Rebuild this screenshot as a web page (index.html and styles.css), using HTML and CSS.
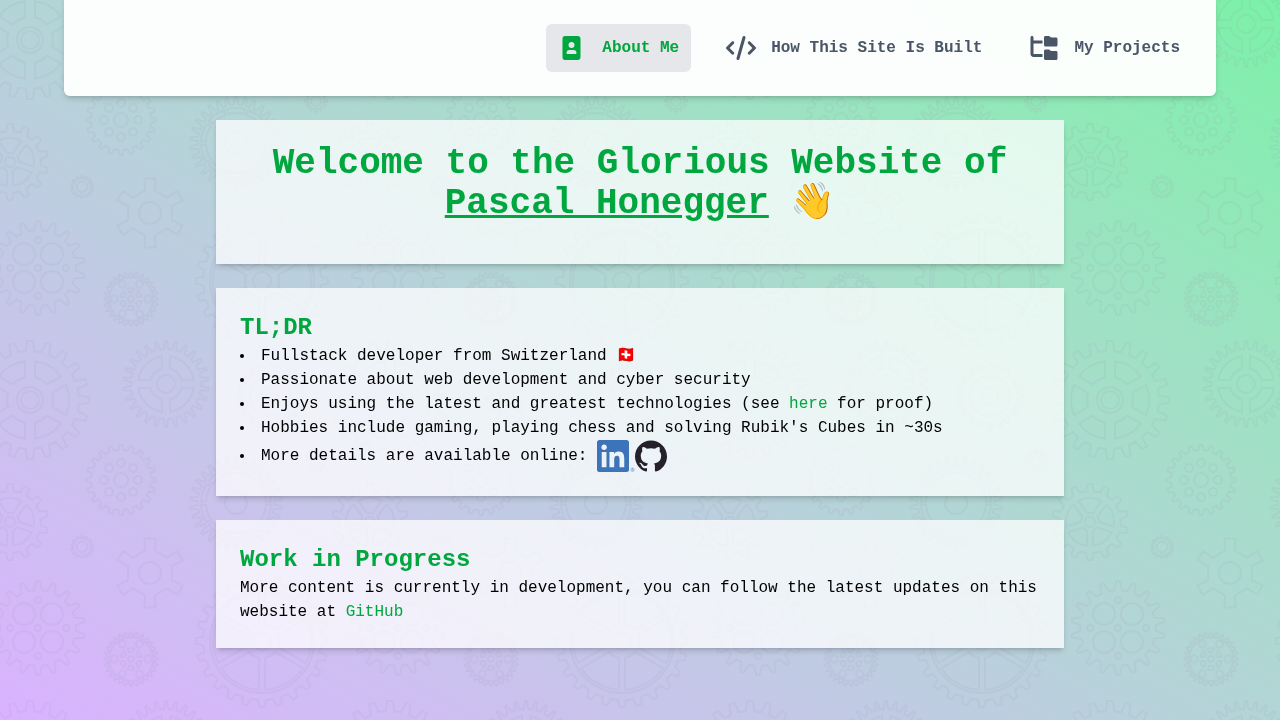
FILE: index.html
```html
<!DOCTYPE html>
<html lang="en">
<head>
<meta charset="utf-8">
<meta name="viewport" content="width=device-width, initial-scale=1">
<title>Pascal Honegger</title>
<link rel="stylesheet" href="styles.css">
</head>
<body>
<svg class="backdrop" aria-hidden="true">
  <defs><pattern id="gears" width="360" height="360" patternUnits="userSpaceOnUse"></pattern></defs>
  <rect width="100%" height="100%" fill="url(#gears)"/>
</svg>
<header class="site-header">
  <nav class="nav">
    <a class="nav-link active" href="#about">
      <svg class="nav-icon" viewBox="0 0 30 24" aria-hidden="true"><path fill-rule="evenodd" d="M8 0h12.500q3 0 3 3v18q0 3-3 3H8q-2.500 0-2.500-3V3q0-3 2.500-3zm6.500 6a3 3 0 1 0 0 6 3 3 0 0 0 0-6zm-2 8q-3 0-3 3.200 0 .8.8.8h8.400q.8 0 .8-.8 0-3.200-3-3.200z"/></svg>
      <span>About Me</span>
    </a>
    <a class="nav-link" href="#built">
      <svg class="nav-icon" viewBox="0 0 640 512" aria-hidden="true"><path d="M392.800 1.200c-17-4.900-34.700 5-39.600 22l-128 448c-4.900 17 5 34.700 22 39.600s34.700-5 39.600-22l128-448c4.900-17-5-34.700-22-39.600zm80.600 120.100c-12.500 12.500-12.500 32.800 0 45.300L562.700 256l-89.400 89.400c-12.500 12.500-12.500 32.800 0 45.300s32.800 12.500 45.300 0l112-112c12.500-12.500 12.500-32.800 0-45.300l-112-112c-12.500-12.500-32.800-12.500-45.300 0zm-306.700 0c-12.500-12.500-32.800-12.500-45.300 0l-112 112c-12.500 12.500-12.500 32.800 0 45.300l112 112c12.500 12.500 32.800 12.500 45.300 0s12.500-32.800 0-45.300L77.300 256l89.400-89.400c12.500-12.500 12.500-32.800 0-45.300z"/></svg>
      <span>How This Site Is Built</span>
    </a>
    <a class="nav-link" href="#projects">
      <svg class="nav-icon" viewBox="-32 0 640 512" aria-hidden="true"><path d="M64 32C64 14.300 49.700 0 32 0S0 14.300 0 32v352c0 35.300 28.700 64 64 64h192v-64H64V160h192V96H64V32zM288 192c0 17.700 14.300 32 32 32h224c17.700 0 32-14.300 32-32V64c0-17.700-14.300-32-32-32h-98.700c-8.500 0-16.600-3.400-22.600-9.400L409.400 9.400c-6-6-14.100-9.400-22.600-9.400H320c-17.700 0-32 14.300-32 32v160zm0 288c0 17.700 14.300 32 32 32h224c17.700 0 32-14.300 32-32V352c0-17.700-14.300-32-32-32h-98.700c-8.500 0-16.600-3.400-22.600-9.400l-13.300-13.300c-6-6-14.100-9.400-22.600-9.400H320c-17.700 0-32 14.300-32 32v160z"/></svg>
      <span>My Projects</span>
    </a>
  </nav>
</header>
<main class="content">
  <section class="card" id="about">
    <h1 class="title">Welcome to the Glorious Website of <span class="name">Pascal Honegger</span> 👋</h1>
  </section>
  <section class="card">
    <h2 class="heading">TL;DR</h2>
    <ul class="facts">
      <li>Fullstack developer from Switzerland 🇨🇭</li>
      <li>Passionate about web development and cyber security</li>
      <li>Enjoys using the latest and greatest technologies (see <a class="link" href="#built">here</a> for proof)</li>
      <li>Hobbies include gaming, playing chess and solving Rubik's Cubes in ~30s</li>
      <li>More details are available online: <a class="social" href="#linkedin" aria-label="LinkedIn"><svg class="linkedin" viewBox="0 0 38 32" aria-hidden="true"><path transform="scale(1.3333)" d="M20.447 20.452h-3.554v-5.569c0-1.328-.027-3.037-1.852-3.037-1.853 0-2.136 1.445-2.136 2.939v5.667H9.351V9h3.414v1.561h.046c.477-.9 1.637-1.850 3.370-1.850 3.601 0 4.267 2.370 4.267 5.455v6.286zM5.337 7.433c-1.144 0-2.063-.926-2.063-2.065 0-1.138.920-2.063 2.063-2.063 1.140 0 2.064.925 2.064 2.063 0 1.139-.925 2.065-2.064 2.065zm1.782 13.019H3.555V9h3.564v11.452zM22.225 0H1.771C.792 0 0 .774 0 1.729v20.542C0 23.227.792 24 1.771 24h20.451C23.200 24 24 23.227 24 22.271V1.729C24 .774 23.200 0 22.222 0h.003z"/><circle class="mark" cx="35.500" cy="29.700" r="1.800"/><path class="mark" d="M35 31v-2.400h.8q.6.6 0 1.200H35m.8 0l.5 1.200"/></svg></a><a class="social" href="#github" aria-label="GitHub"><svg class="github" viewBox="0 0 24 24" aria-hidden="true"><path d="M12 .297c-6.630 0-12 5.373-12 12 0 5.303 3.438 9.800 8.205 11.385.6.113.820-.258.820-.577 0-.285-.010-1.040-.015-2.040-3.338.724-4.042-1.610-4.042-1.610C4.422 18.070 3.633 17.700 3.633 17.700c-1.087-.744.084-.729.084-.729 1.205.084 1.838 1.236 1.838 1.236 1.070 1.835 2.809 1.305 3.495.998.108-.776.417-1.305.760-1.605-2.665-.3-5.466-1.332-5.466-5.930 0-1.310.465-2.380 1.235-3.220-.135-.303-.540-1.523.105-3.176 0 0 1.005-.322 3.300 1.230.960-.267 1.980-.399 3-.405 1.020.006 2.040.138 3 .405 2.280-1.552 3.285-1.230 3.285-1.230.645 1.653.240 2.873.120 3.176.765.840 1.230 1.910 1.230 3.220 0 4.610-2.805 5.625-5.475 5.920.420.360.810 1.096.810 2.220 0 1.606-.015 2.896-.015 3.286 0 .315.210.690.825.570C20.565 22.092 24 17.592 24 12.297c0-6.627-5.373-12-12-12"/></svg></a></li>
    </ul>
  </section>
  <section class="card">
    <h2 class="heading">Work in Progress</h2>
    <p class="text">More content is currently in development, you can follow the latest updates on this website at <a class="link" href="#github">GitHub</a></p>
  </section>
</main>
<script src="gears.js"></script>
</body>
</html>
```
FILE: styles.css
```css
* { box-sizing: border-box; }
body {
  margin: 0;
  min-height: 100vh;
  font: 16px/24px "Liberation Mono", "Noto Color Emoji", monospace;
  color: #000;
  background: linear-gradient(to top right in oklab, #dab2ff, #7bf1a8) fixed;
}
.backdrop {
  position: fixed;
  inset: 0;
  z-index: -1;
  width: 100%;
  height: 100%;
}
.gear {
  fill: none;
  stroke: #9c92ac;
  stroke-opacity: 0.11;
  stroke-width: 2;
  stroke-linejoin: round;
}
.site-header {
  margin: 0 5%;
  padding: 24px;
  border-radius: 0 0 6px 6px;
  background: rgb(255 255 255 / 96%);
  box-shadow: 0 4px 6px -1px rgb(0 0 0 / 15%), 0 2px 4px -2px rgb(0 0 0 / 15%);
}
.nav {
  display: flex;
  flex-wrap: wrap;
  justify-content: flex-end;
  gap: 24px;
}
.nav-link {
  display: flex;
  align-items: center;
  gap: 15px;
  padding: 12px 12px 12px 11px;
  border-radius: 6px;
  color: #4a5565;
  font-weight: 700;
  text-decoration: none;
}
.nav-link.active {
  color: #00a63e;
  background: #e5e7eb;
}
.nav-icon {
  width: 30px;
  height: 24px;
  fill: currentColor;
}
.content {
  display: flex;
  flex-direction: column;
  gap: 24px;
  max-width: 896px;
  margin: 0 auto;
  padding: 24px;
}
.card {
  padding: 24px;
  background: rgb(255 255 255 / 75%);
  box-shadow: 0 4px 6px -1px rgb(0 0 0 / 15%), 0 2px 4px -2px rgb(0 0 0 / 15%);
}
.title {
  margin: 0 0 16px;
  font-size: 36px;
  line-height: 40px;
  text-align: center;
  color: #00a63e;
}
.name { text-decoration: underline; }
.heading {
  margin: 0;
  font-size: 24px;
  line-height: 32px;
  color: #00a63e;
}
.facts {
  margin: 0;
  padding: 0;
  list-style: disc inside;
}
.text { margin: 0; }
.link {
  color: #00a63e;
  text-decoration: none;
}
.social {
  display: inline-block;
  vertical-align: middle;
}
.social svg { display: block; height: 32px; }
.linkedin { width: 38px; fill: #3d74b9; }
.linkedin .mark {
  fill: none;
  stroke: #3d74b9;
  stroke-opacity: 0.7;
  stroke-width: 0.5;
}
.github { width: 32px; fill: #24212a; }
```
FILE: gears.js
```js
const tile = document.getElementById('gears');
const TAU = Math.PI * 2;

const at = (r, a) => `${(r * Math.sin(a)).toFixed(1)} ${(-r * Math.cos(a)).toFixed(1)}`;
const circle = (x, y, r) => `M${x - r} ${y}a${r} ${r} 0 1 0 ${2 * r} 0a${r} ${r} 0 1 0 ${-2 * r} 0z`;

function teeth(n, outer, root, top = 0.15, base = 0.27) {
  const points = [];
  for (let i = 0; i < n; i++) {
    const a = (i * TAU) / n;
    const s = TAU / n;
    points.push(at(root, a - base * s), at(outer, a - top * s), at(outer, a + top * s), at(root, a + base * s));
  }
  return `M${points.join('L')}z`;
}

// Sector windows with a constant spoke width between them.
function windows(n, inner, outer, spoke, turn = 0) {
  let d = '';
  for (let i = 0; i < n; i++) {
    const a = ((i + turn) * TAU) / n;
    const o = Math.PI / n - spoke / outer;
    const k = Math.max(0, Math.PI / n - spoke / inner);
    d += `M${at(inner, a - k)}L${at(outer, a - o)}A${outer} ${outer} 0 0 1 ${at(outer, a + o)}L${at(inner, a + k)}A${inner} ${inner} 0 0 0 ${at(inner, a - k)}z`;
  }
  return d;
}

function holes(n, distance, r) {
  let d = '';
  for (let i = 0; i < n; i++) {
    const a = (i * TAU) / n + Math.PI / 2;
    d += circle(distance * Math.sin(a), -distance * Math.cos(a), r);
  }
  return d;
}

const gears = [
  [30, 40, teeth(20, 59, 49) + windows(6, 23, 39, 5, 0.5) + circle(0, 0, 13) + circle(0, 0, 9)],
  [121, 120, teeth(20, 35, 30) + holes(8, 17, 4) + circle(0, 0, 7)],
  [10, 162, teeth(14, 38, 31) + windows(5, 9, 24, 3) + circle(0, 0, 5)],
  [82, 187, teeth(14, 11, 9) + circle(0, 0, 5.5)],
  [316, 101, teeth(12, 11, 8) + circle(0, 0, 5)],
  [150, 213, teeth(6, 35, 23, 0.15, 0.2) + circle(0, 0, 11)],
  [38, 268, teeth(18, 47, 38, 0.1, 0.29) + holes(4, 28, 3) + circle(0, 0, 3)
    + circle(-14, -14, 11) + circle(14, -14, 11) + circle(-14, 14, 11) + circle(14, 14, 11)],
  [131, 299, teeth(28, 27, 24, 0.06, 0.35) + circle(0, 0, 22) + holes(6, 17, 3.5) + windows(6, 7, 11, 2) + circle(0, 0, 3)],
  [166, 24, teeth(26, 43, 35, 0.1, 0.26) + windows(4, 16, 28, 4, 0.5) + circle(0, 0, 9)],
  [236, 143, teeth(30, 46, 38, 0.1, 0.3) + windows(10, 30, 35, 1.5) + circle(0, 0, 11)],
  [262, 281, teeth(24, 66, 59) + circle(0, 0, 52) + windows(6, 17, 49, 3, 0.5) + circle(0, 0, 9)],
  [270, 36, teeth(20, 33, 28) + circle(0, 0, 20) + circle(0, 0, 8)],
];

// Gears that cross a tile edge are repeated on the opposite side.
for (const [x, y, d] of gears) {
  for (const dx of [-360, 0, 360]) {
    for (const dy of [-360, 0, 360]) {
      if (x + dx < -70 || x + dx > 430 || y + dy < -70 || y + dy > 430) continue;
      const path = document.createElementNS('http://www.w3.org/2000/svg', 'path');
      path.setAttribute('class', 'gear');
      path.setAttribute('d', d);
      path.setAttribute('transform', `translate(${x + dx} ${y + dy})`);
      tile.append(path);
    }
  }
}
```
